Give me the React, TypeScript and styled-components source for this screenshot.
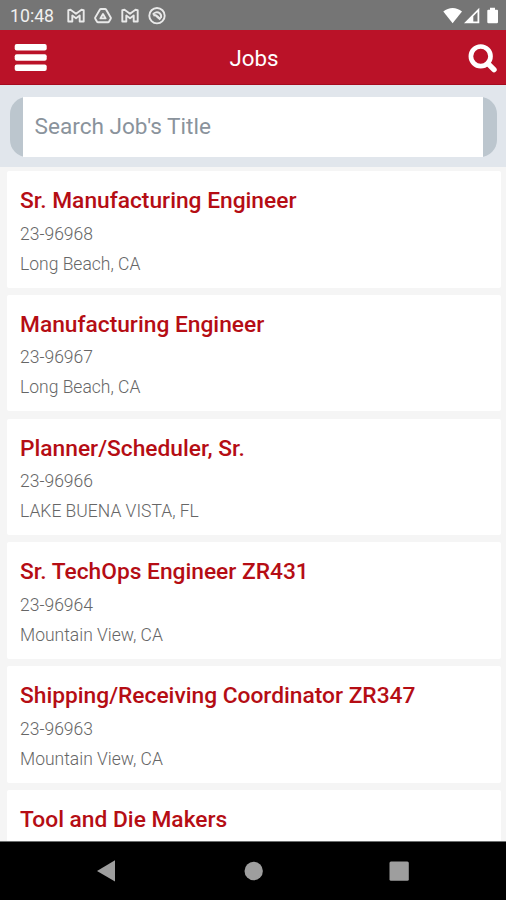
import React from "react";
import styled, { createGlobalStyle } from "styled-components";

const GlobalStyle = createGlobalStyle`
  * { box-sizing: border-box; }
  body { margin: 0; overflow: hidden; }
  input, button { font-family: inherit; }
`;

const Screen = styled.div`
  display: flex;
  flex-direction: column;
  width: 506px;
  height: 900px;
  overflow: hidden;
  background: #f5f5f5;
  font-family: Roboto, "Liberation Sans", sans-serif;
`;

const StatusBar = styled.div`
  flex: none;
  display: flex;
  align-items: center;
  height: 30px;
  padding: 1px 8px 0 10px;
  background: #757575;
  color: #f0f0f0;
`;

const Clock = styled.span`
  width: 57px;
  font-size: 17.7px;
  line-height: 20px;
`;

const Notifications = styled.div`
  display: flex;
  flex: 1;
  gap: 9px;
`;

const SystemIcons = styled.svg`
  display: block;
  width: 56px;
  height: 20px;
`;

const Notice = styled.svg`
  display: block;
  width: 18px;
  height: 18px;
  fill: none;
  stroke: #e9e9e9;
  stroke-width: 1.9;
  stroke-linejoin: round;
`;

const Header = styled.header`
  flex: none;
  display: flex;
  align-items: center;
  justify-content: space-between;
  height: 55px;
  padding: 0 8px 0 14px;
  background: #ba1228;
  border-bottom: 1px solid #a50a1e;
  color: #fff;
`;

const HeaderButton = styled.button`
  display: flex;
  width: 33px;
  height: 32px;
  padding: 0;
  border: 0;
  background: none;
`;

const PageTitle = styled.h1`
  margin: 2px 4px 0 0;
  font-size: 22.3px;
  line-height: 28px;
  font-weight: 400;
`;

const SearchArea = styled.div`
  flex: none;
  height: 82px;
  padding: 12px 9px 11px 10px;
  background: #e1e6ec;
`;

const SearchPill = styled.div`
  display: flex;
  height: 59.5px;
  padding: 0 14.5px 0 12.5px;
  border-radius: 17px;
  background: #bcc6ce;
`;

const SearchInput = styled.input`
  flex: 1;
  min-width: 0;
  padding: 0 12px;
  border: 0;
  border-radius: 0;
  outline: 0;
  background: #fff;
  font-size: 22.6px;
  &::placeholder {
    color: #8a939c;
    opacity: 1;
  }
`;

const JobList = styled.main`
  flex: 1;
  min-height: 0;
  display: flex;
  flex-direction: column;
  gap: 7.3px;
  padding: 4px 5.5px 0 6.5px;
  overflow: hidden;
`;

const JobCard = styled.article`
  flex: none;
  height: 116.5px;
  padding: 14px 13.5px 0;
  border-radius: 2px;
  background: #fff;
`;

const JobTitle = styled.h2`
  margin: 0 0 1.6px;
  color: #b50d14;
  font-size: 22.75px;
  line-height: 32px;
  font-weight: 500;
`;

const JobDetail = styled.p`
  margin: 0;
  color: #666;
  font-size: 17.5px;
  line-height: 30px;
  font-weight: 300;
`;

const NavBar = styled.nav`
  flex: none;
  height: 59px;
  background: #000;
  border-top: 1px solid #6d7070;
`;

const jobs = [
  { title: "Sr. Manufacturing Engineer", id: "23-96968", place: "Long Beach, CA" },
  { title: "Manufacturing Engineer", id: "23-96967", place: "Long Beach, CA" },
  { title: "Planner/Scheduler, Sr.", id: "23-96966", place: "LAKE BUENA VISTA, FL" },
  { title: "Sr. TechOps Engineer ZR431", id: "23-96964", place: "Mountain View, CA" },
  { title: "Shipping/Receiving Coordinator ZR347", id: "23-96963", place: "Mountain View, CA" },
  { title: "Tool and Die Makers", id: "", place: "" },
];

const MailNotice = () => (
  <Notice viewBox="0 0 18 18">
    <path d="M1.300 3.200 3.500 2.800 9 6.700l5.500-3.900 2.200.4v11.300h-4V8.500L9 11.200 5.300 8.500v6h-4Z" />
  </Notice>
);

const DriveNotice = () => (
  <Notice viewBox="0 0 18 18">
    <path d="M7 2h4q.8 0 1.200.7l4.500 7.700q.4.700 0 1.400l-1.600 2.700q-.4.700-1.200.7H4.100q-.8 0-1.200-.7l-1.600-2.700q-.4-.7 0-1.400l4.500-7.700Q6.200 2 7 2Z" />
    <path d="m9 7 2.600 4.400H6.400Z" />
  </Notice>
);

const CircleNotice = () => (
  <Notice viewBox="0 0 18 18">
    <circle cx="9" cy="8.700" r="7.700" />
    <path d="M4.900 7.500C6.300 5.200 9.500 4.500 11.700 6.300 13.300 7.700 13.400 9.500 12.900 11" />
    <path d="M5.300 8.500C7.200 7.600 8.200 8.300 9.200 9.500L12.500 12.300" strokeWidth="2.300" />
  </Notice>
);

export default function App() {
  return (
    <Screen>
      <GlobalStyle />
      <StatusBar>
        <Clock>10:48</Clock>
        <Notifications>
          <MailNotice />
          <DriveNotice />
          <MailNotice />
          <CircleNotice />
        </Notifications>
        <SystemIcons viewBox="0 0 56 20" fill="#fff">
          <path d="M1.300 5.500C6.800.800 14.500.800 20 5.500L10.600 17.200Z" />
          <path fillRule="evenodd" d="M22 17.300 37.300 1.800v15.500Zm9.300-1.700h4.200V6L31.300 10.300Z" />
          <path d="M48 1.700h5v2h2q1 0 1 1v11.300q0 1.200-1.200 1.200h-8.300Q45.300 17.200 45.300 16V4.700q0-1 1-1H48Z" />
        </SystemIcons>
      </StatusBar>
      <Header>
        <HeaderButton aria-label="Menu">
          <svg width="33" height="32" viewBox="0 0 33 32" fill="#fff">
            <rect x=".7" y="3" width="32" height="6.500" rx="2" />
            <rect x=".7" y="13.300" width="32" height="6.500" rx="2" />
            <rect x=".7" y="23.500" width="32" height="6.500" rx="2" />
          </svg>
        </HeaderButton>
        <PageTitle>Jobs</PageTitle>
        <HeaderButton aria-label="Search">
          <svg width="33" height="32" viewBox="0 0 33 32" fill="none" stroke="#fff">
            <circle cx="15.700" cy="15.300" r="9.800" strokeWidth="4.700" />
            <path d="m23 22.700 6 6" strokeWidth="5.400" strokeLinecap="round" />
          </svg>
        </HeaderButton>
      </Header>
      <SearchArea>
        <SearchPill>
          <SearchInput placeholder="Search Job's Title" />
        </SearchPill>
      </SearchArea>
      <JobList>
        {jobs.map((job) => (
          <JobCard key={job.title}>
            <JobTitle>{job.title}</JobTitle>
            <JobDetail>{job.id}</JobDetail>
            <JobDetail>{job.place}</JobDetail>
          </JobCard>
        ))}
      </JobList>
      <NavBar>
        <svg width="506" height="58" viewBox="0 842 506 58" fill="#9e9e9e">
          <path d="M97 871 115 860.300v21.200Z" />
          <circle cx="253.700" cy="871" r="9.200" />
          <rect x="389.500" y="861.500" width="19.300" height="19.300" rx="1.500" />
        </svg>
      </NavBar>
    </Screen>
  );
}
